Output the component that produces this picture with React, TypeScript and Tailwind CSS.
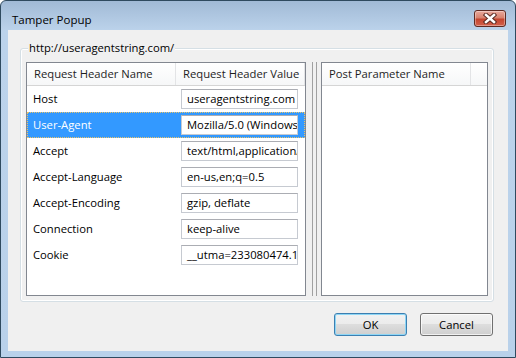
import React from 'react'

const headers: [string, string][] = [
  ['Host', 'useragentstring.com'],
  ['User-Agent', 'Mozilla/5.0 (Windows NT 6.1; WOW64; rv:2.0) Gecko'],
  ['Accept', 'text/html,application/xhtml+xml,application/xml'],
  ['Accept-Language', 'en-us,en;q=0.5'],
  ['Accept-Encoding', 'gzip, deflate'],
  ['Connection', 'keep-alive'],
  ['Cookie', '__utma=233080474.1834620473.1300000000'],
]

function CloseButton() {
  return (
    <div className="mr-[2px] mt-[9px] flex h-[17px] w-[32px] items-center justify-center rounded-[3px] border border-[#5e2a22] bg-[linear-gradient(to_bottom,#e9a99d,#d7826f_45%,#c4452f_55%,#d3614c)] shadow-[inset_0_0_0_1px_rgba(255,255,255,0.35)]">
      <svg width="14" height="11" viewBox="0 0 14 11">
        <path d="M3 2 L11 9 M11 2 L3 9" stroke="#5b2a22" strokeWidth="4.5" strokeLinecap="square" />
        <path d="M3 2 L11 9 M11 2 L3 9" stroke="#ffffff" strokeWidth="2.5" strokeLinecap="square" />
      </svg>
    </div>
  )
}

function HeaderCell({ label, w }: { label: string; w?: string }) {
  return (
    <div className={`flex h-full items-center overflow-hidden whitespace-nowrap border-r border-[#e3e4e6] pl-[7px] ${w ?? 'flex-1'}`}>
      {label}
    </div>
  )
}

function Button({ label, isDefault }: { label: string; isDefault?: boolean }) {
  return (
    <div
      className={`flex h-[23px] w-[73px] items-center justify-center rounded-[3px] border bg-[linear-gradient(to_bottom,#f2f2f2,#ebebeb_50%,#dddddd_50%,#cfcfcf)] ${
        isDefault ? 'border-[#3c7fb1] shadow-[inset_0_0_0_1px_#8ed6f5]' : 'border-[#707070] shadow-[inset_0_0_0_1px_rgba(255,255,255,0.7)]'
      }`}
    >
      {label}
    </div>
  )
}

export default function App() {
  return (
    <div className="h-[358px] w-[516px] bg-white text-[11.25px] leading-[16px] text-black [font-family:'Open_Sans',sans-serif]">
      <div className="flex h-full flex-col rounded-t-[6px] border border-[#2f4a5f] bg-[linear-gradient(to_bottom,#a1bad6,#bcd3eb_30px,#b9d1ea)] px-[7px] pb-[6px]">
        {/* ── Title bar ───────────────────────── */}
        <div className="flex h-[29px] shrink-0 justify-between">
          <div className="pl-[4px] pt-[11px] text-[11.5px]">Tamper Popup</div>
          <CloseButton />
        </div>

        {/* ── Client area ─────────────────────── */}
        <div className="flex flex-1 flex-col bg-[#f0f0f0]">
          <div className="relative ml-[12px] mr-[14px] mt-[18px] flex h-[254px] rounded-[3px] border border-[#d5dfe5] px-[5px] pb-[5px] pt-[13px] shadow-[inset_0_0_0_1px_#ffffff]">
            <span className="absolute -top-[9px] left-[7px] bg-[#f0f0f0] px-[1px]">http://useragentstring.com/</span>

            {/* request headers */}
            <div className="flex w-[280px] flex-col border border-[#828790] bg-white">
              <div className="flex h-[23px] shrink-0 border-b border-[#d5d5d5] bg-[linear-gradient(to_bottom,#ffffff,#f6f7f8)] text-[#1e1e1e]">
                <HeaderCell label="Request Header Name" w="w-[149px]" />
                <HeaderCell label="Request Header Value" />
              </div>
              {headers.map(([name, value], i) => {
                const selected = i === 1
                return (
                  <div
                    key={name}
                    className={`flex h-[26px] items-center ${
                      selected ? 'border border-dotted border-[#e9c46a] bg-[#3399ff] text-white' : 'border border-transparent'
                    }`}
                  >
                    <div className="w-[149px] pl-[5px]">{name}</div>
                    <div className="ml-[4px] flex h-[20px] w-[117px] items-center overflow-hidden whitespace-nowrap border border-[#c6cad1] border-t-[#abadb3] bg-white pl-[5px] text-black">
                      {value}
                    </div>
                  </div>
                )
              })}
            </div>

            {/* splitter */}
            <div className="flex w-[15px] justify-center gap-[3px] pl-[1px]">
              <div className="w-px bg-[#a0a0a0]" />
              <div className="w-px bg-[#a0a0a0]" />
            </div>

            {/* post parameters */}
            <div className="flex flex-1 flex-col border border-[#828790] bg-white">
              <div className="flex h-[23px] shrink-0 border-b border-[#d5d5d5] bg-[linear-gradient(to_bottom,#ffffff,#f6f7f8)] text-[#1e1e1e]">
                <HeaderCell label="Post Parameter Name" w="w-[149px]" />
                <div className="flex-1" />
              </div>
            </div>
          </div>

          {/* ── Buttons ─────────────────────────── */}
          <div className="mt-[11px] flex justify-end gap-[13px] pr-[15px]">
            <Button label="OK" isDefault />
            <Button label="Cancel" />
          </div>
        </div>
      </div>
    </div>
  )
}
